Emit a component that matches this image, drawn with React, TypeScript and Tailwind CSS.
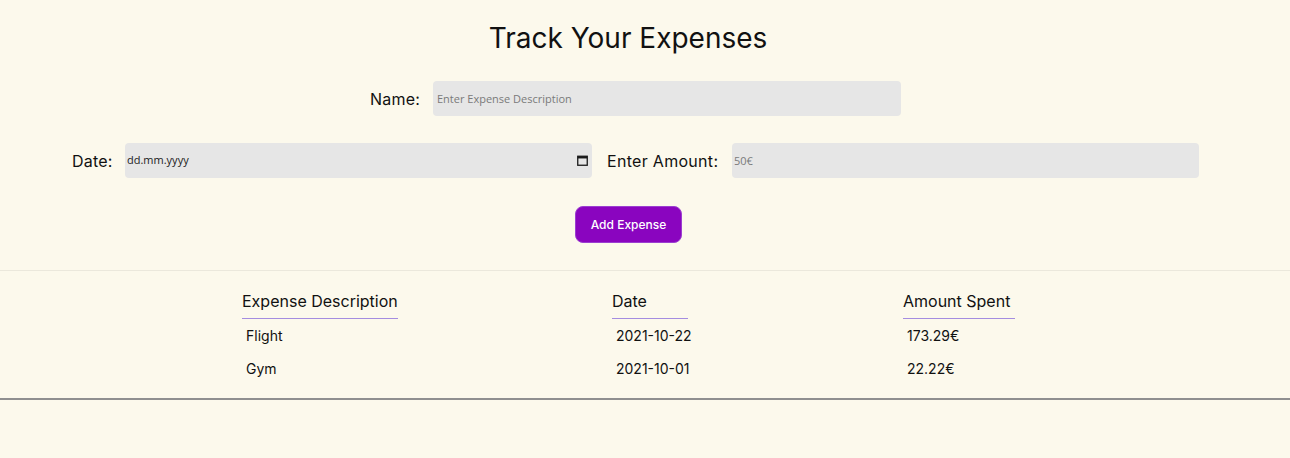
const expenses = [
  { description: 'Flight', date: '2021-10-22', amount: '173.29€' },
  { description: 'Gym', date: '2021-10-01', amount: '22.22€' },
];

const headers = [
  { title: 'Expense Description', width: 'min-w-[155px]' },
  { title: 'Date', width: 'min-w-[76px]' },
  { title: 'Amount Spent', width: 'min-w-[112px]' },
];

const CalendarIcon = () => (
  <svg width="11" height="11" viewBox="0 0 11 11" fill="none">
    <rect x="0.75" y="1.25" width="9.5" height="9" stroke="#1a1a1a" strokeWidth="1.3" />
    <rect x="0.75" y="1.25" width="9.5" height="2.2" fill="#1a1a1a" />
  </svg>
);

export default function App() {
  return (
    <div className="min-h-screen bg-[#fcf9ec] font-['Inter',sans-serif] text-[#111]">
      <section className="pt-[21px]">
        <h1 className="pr-[34px] text-center text-[28px] leading-[34px] font-normal">Track Your Expenses</h1>

        <div className="mt-[26px] flex items-center justify-center pr-[19px]">
          <label className="mr-[14px] w-[49px] whitespace-nowrap text-[16px] tracking-[0.2px]">Name:</label>
          <input
            placeholder="Enter Expense Description"
            className="h-[35px] w-[468px] rounded-[4px] bg-[#e6e6e6] px-[4px] font-['Open_Sans',sans-serif] text-[11px] outline-none placeholder:text-[#7a7a7a]"
          />
        </div>

        <div className="mt-[27px] flex items-center justify-center pr-[19px]">
          <label className="mr-[14px] w-[39px] whitespace-nowrap text-[16px] tracking-[0.2px]">Date:</label>
          <div className="flex h-[35px] w-[467px] items-center justify-between rounded-[4px] bg-[#e6e6e6] pl-[2px] pr-[4px]">
            <span className="font-['Open_Sans',sans-serif] text-[11px] text-[#222]">dd.mm.yyyy</span>
            <CalendarIcon />
          </div>
          <label className="ml-[15px] mr-[14px] w-[111px] whitespace-nowrap text-[16px] tracking-[0.3px]">Enter Amount:</label>
          <input
            placeholder="50€"
            className="h-[35px] w-[467px] rounded-[4px] bg-[#e6e6e6] px-[2px] font-['Open_Sans',sans-serif] text-[11px] outline-none placeholder:text-[#7a7a7a]"
          />
        </div>

        <div className="mt-[28px] flex justify-center pr-[33px]">
          <button
            type="button"
            className="h-[37px] w-[107px] rounded-[8px] border border-[#9b3fd0] bg-[#8a05bf] text-[12px] font-medium text-white"
          >
            Add Expense
          </button>
        </div>
      </section>

      <div className="mt-[27px] border-t border-[#ebe8dc]" />

      <section className="pt-[18px] pb-[17px]">
        <div className="ml-[242px] grid grid-cols-[370px_291px_auto]">
          {headers.map((h) => (
            <div key={h.title}>
              <span className={`inline-block border-b border-[#a58de0] pb-[7px] text-[16px] leading-[20px] ${h.width}`}>
                {h.title}
              </span>
            </div>
          ))}
          {expenses.map((row, i) => (
            <div key={row.description} className="contents">
              {[row.description, row.date, row.amount].map((cell, j) => (
                <div key={j} className={`${i === 0 ? 'mt-[5px]' : 'mt-[9px]'} pl-[4px] text-[14px] leading-[24px]`}>
                  {cell}
                </div>
              ))}
            </div>
          ))}
        </div>
      </section>

      <div className="border-t-2 border-[#8f8f8f]" />
    </div>
  );
}
